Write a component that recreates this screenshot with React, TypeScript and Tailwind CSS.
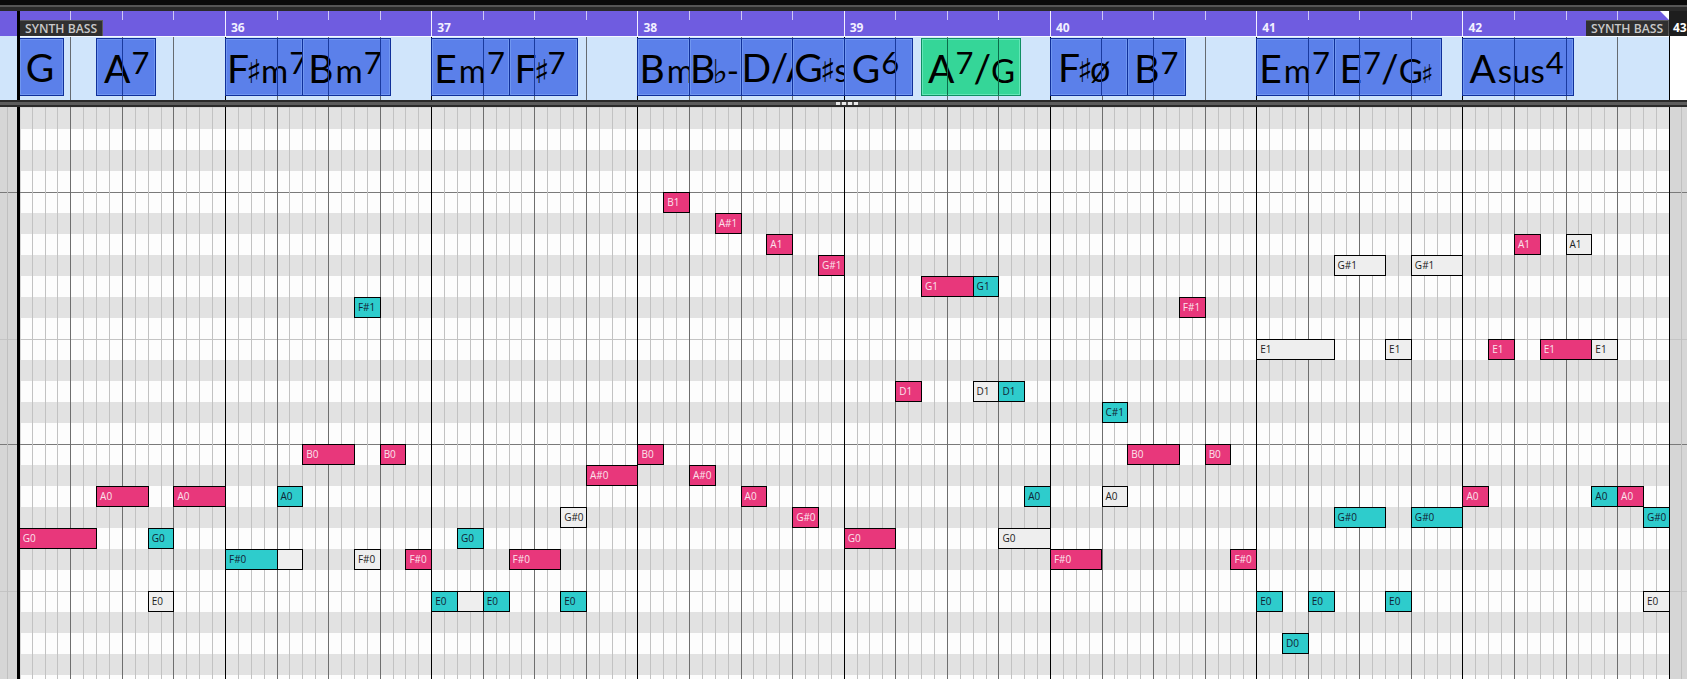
import React from "react";

const STEP = 12.89;
const x = (s: number) => s * STEP - 1.25;

// top to bottom, D#2 down to C0
const ROWS = [
  "D#2", "D2", "C#2", "C2", "B1", "A#1", "A1", "G#1", "G1", "F#1", "F1", "E1", "D#1", "D1",
  "C#1", "C1", "B0", "A#0", "A0", "G#0", "G0", "F#0", "F0", "E0", "D#0", "D0", "C#0", "C0",
];

type Kind = "p" | "t" | "w";
// [pitch, start in 16ths, end in 16ths, colour, label]
const NOTES: [string, number, number, Kind, string?][] = [
  ["G0", 0, 6, "p", "G0"], ["A0", 6, 10, "p", "A0"], ["G0", 10, 12, "t", "G0"], ["E0", 10, 12, "w", "E0"],
  ["A0", 12, 16, "p", "A0"], ["F#0", 16, 20, "t", "F#0"], ["F#0", 20, 22, "w"], ["A0", 20, 22, "t", "A0"],
  ["B0", 22, 26, "p", "B0"], ["F#0", 26, 28, "w", "F#0"], ["F#1", 26, 28, "t", "F#1"], ["B0", 28, 30, "p", "B0"],
  ["F#0", 30, 32, "p", "F#0"], ["E0", 32, 34, "t", "E0"], ["E0", 34, 36, "w"], ["G0", 34, 36, "t", "G0"],
  ["E0", 36, 38, "t", "E0"], ["F#0", 38, 42, "p", "F#0"], ["E0", 42, 44, "t", "E0"], ["G#0", 42, 44, "w", "G#0"],
  ["A#0", 44, 48, "p", "A#0"], ["B0", 48, 50, "p", "B0"], ["B1", 50, 52, "p", "B1"], ["A#0", 52, 54, "p", "A#0"],
  ["A#1", 54, 56, "p", "A#1"], ["A0", 56, 58, "p", "A0"], ["A1", 58, 60, "p", "A1"], ["G#0", 60, 62, "p", "G#0"],
  ["G#1", 62, 64, "p", "G#1"], ["G0", 64, 68, "p", "G0"], ["D1", 68, 70, "p", "D1"], ["G1", 70, 74, "p", "G1"],
  ["G1", 74, 76, "t", "G1"], ["D1", 74, 76, "w", "D1"], ["D1", 76, 78, "t", "D1"], ["G0", 76, 80, "w", "G0"],
  ["A0", 78, 80, "t", "A0"], ["F#0", 80, 84, "p", "F#0"], ["C#1", 84, 86, "t", "C#1"], ["A0", 84, 86, "w", "A0"],
  ["B0", 86, 90, "p", "B0"], ["F#1", 90, 92, "p", "F#1"], ["B0", 92, 94, "p", "B0"], ["F#0", 94, 96, "p", "F#0"],
  ["E1", 96, 102, "w", "E1"], ["E0", 96, 98, "t", "E0"], ["D0", 98, 100, "t", "D0"], ["E0", 100, 102, "t", "E0"],
  ["G#0", 102, 106, "t", "G#0"], ["G#1", 102, 106, "w", "G#1"], ["E1", 106, 108, "w", "E1"], ["E0", 106, 108, "t", "E0"],
  ["G#0", 108, 112, "t", "G#0"], ["G#1", 108, 112, "w", "G#1"], ["A0", 112, 114, "p", "A0"], ["E1", 114, 116, "p", "E1"],
  ["A1", 116, 118, "p", "A1"], ["E1", 118, 122, "p", "E1"], ["E1", 122, 124, "w", "E1"], ["A1", 120, 122, "w", "A1"],
  ["A0", 122, 124, "t", "A0"], ["A0", 124, 126, "p", "A0"], ["G#0", 126, 128, "t", "G#0"], ["E0", 126, 128, "w", "E0"],
];

const noteStyle: Record<Kind, string> = {
  p: "bg-[#e8377b] text-[#fbe3ec]",
  t: "bg-[#2ecccc] text-[#123]",
  w: "bg-[#eeeeee] text-[#222]",
};

type Part = [string, keyof typeof partStyle];
type Chord = { from: number; to: number; pad: string; parts: Part[]; green?: boolean };

const partStyle = {
  r: "text-[39px]",
  a: "text-[33px] font-['DejaVu_Sans',sans-serif] mx-[-3px]",
  b: "text-[26px] font-['DejaVu_Sans',sans-serif] mx-[-2px]",
  l: "text-[33px] ml-[2px]",
  s: "text-[31px] align-[9px] ml-[1px]",
  f: "text-[33px]",
  o: "text-[36px]",
};

const CHORDS: Chord[] = [
  { from: 0, to: 3.45, pad: "pl-[6px]", parts: [["G", "r"]] },
  { from: 6, to: 10.6, pad: "pl-[7px]", parts: [["A", "r"], ["7", "s"]] },
  { from: 16, to: 22, pad: "pl-[1px]", parts: [["F", "r"], ["♯", "a"], ["m", "l"], ["7", "s"]] },
  { from: 22, to: 28.8, pad: "pl-[5px]", parts: [["B", "r"], ["m", "l"], ["7", "s"]] },
  { from: 32, to: 38, pad: "pl-[2px]", parts: [["E", "r"], ["m", "l"], ["7", "s"]] },
  { from: 38, to: 43.3, pad: "pl-[5px]", parts: [["F", "r"], ["♯", "a"], ["7", "s"]] },
  { from: 48, to: 52, pad: "pl-[1px]", parts: [["B", "r"], ["m", "l"], ["7", "s"]] },
  { from: 52, to: 56, pad: "pl-0", parts: [["B", "r"], ["♭", "a"], ["-", "l"], ["7", "s"]] },
  { from: 56, to: 60, pad: "pl-0", parts: [["D", "r"], ["/", "r"], ["A", "r"]] },
  { from: 60, to: 64, pad: "pl-[1px]", parts: [["G", "r"], ["♯", "a"], ["sus", "l"]] },
  { from: 64, to: 69.3, pad: "pl-[7px]", parts: [["G", "r"], ["6", "s"]] },
  { from: 70, to: 77.7, pad: "pl-[6px]", green: true, parts: [["A", "r"], ["7", "s"], ["/", "r"], ["G", "f"]] },
  { from: 80, to: 86, pad: "pl-[7px]", parts: [["F", "r"], ["♯", "a"], ["ø", "o"]] },
  { from: 86, to: 90.5, pad: "pl-[6px]", parts: [["B", "r"], ["7", "s"]] },
  { from: 96, to: 102, pad: "pl-[2px]", parts: [["E", "r"], ["m", "l"], ["7", "s"]] },
  { from: 102, to: 110.3, pad: "pl-[5px]", parts: [["E", "r"], ["7", "s"], ["/", "r"], ["G", "f"], ["♯", "b"]] },
  { from: 112, to: 120.6, pad: "pl-[6px]", parts: [["A", "r"], ["sus", "l"], ["4", "s"]] },
];

const beats = Array.from({ length: 33 }, (_, i) => i * 4);
const sixteenths = Array.from({ length: 129 }, (_, i) => i);

function Tag() {
  return (
    <div className="h-[16px] w-[83px] bg-[#303030] border-t border-r border-[#5a5a5a] text-[#c9c9c9] text-[12.2px] leading-[15px] font-semibold pl-[5px] whitespace-nowrap">
      SYNTH BASS
    </div>
  );
}

function Ruler() {
  return (
    <div className="flex h-[25px] shrink-0">
      <div className="w-[17px] bg-[#6f5ce0]" />
      <div className="w-[3px] bg-black" />
      <div className="relative w-[1649px] bg-[#6f5ce0] overflow-hidden">
        {beats.filter((b) => b < 128 && b > 0).map((b) => (
          <div
            key={b}
            className={b % 16 === 0 ? "absolute top-0 w-px h-[25px] bg-[#f2f0ff]" : "absolute top-0 w-px h-[9px] bg-[#cfc8f5]"}
            style={{ left: x(b) }}
          />
        ))}
        {[36, 37, 38, 39, 40, 41, 42].map((n, i) => (
          <span
            key={n}
            className="absolute top-[9px] text-[12px] leading-[16px] font-bold text-[#f2f0ff]"
            style={{ left: x((i + 1) * 16) + 6 }}
          >
            {n}
          </span>
        ))}
        <div className="absolute top-[9px] left-0"><Tag /></div>
        <div className="absolute top-[9px] right-0"><Tag /></div>
        <div className="absolute top-0 right-0 w-0 h-0 border-t-[9px] border-l-[9px] border-t-white border-l-transparent" />
      </div>
      <div className="flex-1 bg-[#1e1e1e] text-white text-[12px] font-bold leading-[16px] pt-[9px] pl-[4px] overflow-hidden">43</div>
    </div>
  );
}

function ChordCard({ c }: { c: Chord }) {
  const inner = beats.filter((b) => b > c.from && b < c.to);
  return (
    <div
      className={
        "absolute top-[1px] h-[58px] overflow-hidden border flex items-center whitespace-nowrap text-black leading-none font-['Lato',sans-serif] " +
        c.pad +
        " " +
        (c.green
          ? "bg-[#35d698] border-[#0f8f63] shadow-[inset_0_0_0_1px_#63e6b6]"
          : "bg-[#5b80ea] border-[#10309a] shadow-[inset_0_0_0_1px_#7096f0]")
      }
      style={{ left: x(c.from), width: (c.to - c.from) * STEP + 1 }}
    >
      <div>
        {c.parts.map(([t, k], i) => (
          <span key={i} className={partStyle[k]}>{t}</span>
        ))}
      </div>
      {inner.map((b) => (
        <div
          key={b}
          className={c.green ? "absolute inset-y-0 w-px bg-[#0b6b4a]" : "absolute inset-y-0 w-px bg-[#1a3a9e]"}
          style={{ left: (b - c.from) * STEP - 1 }}
        />
      ))}
    </div>
  );
}

function ChordTrack() {
  return (
    <div className="flex h-[64px] shrink-0 bg-[#d0e5fb]">
      <div className="w-[17px]" />
      <div className="w-[3px] bg-black" />
      <div className="relative w-[1649px] overflow-hidden border-t border-[#f4f9ff]">
        {beats.filter((b) => b > 0 && b < 128).map((b) => (
          <div
            key={b}
            className={b % 16 === 0 ? "absolute inset-y-0 w-px bg-black" : "absolute inset-y-0 w-px bg-[#666b70]"}
            style={{ left: x(b) }}
          />
        ))}
        {CHORDS.map((c) => (
          <ChordCard key={c.from} c={c} />
        ))}
      </div>
      <div className="flex-1 bg-white border-l border-black" />
    </div>
  );
}

function Divider() {
  return (
    <div className="h-[7px] shrink-0 bg-[#2a2a2a] flex flex-col justify-center">
      <div className="h-[3px] bg-[#5c5c5c] flex justify-center gap-[2px] pl-[7px]">
        {[0, 1, 2, 3].map((i) => (
          <div key={i} className="w-[4px] h-[3px] bg-[#e8e8e8]" />
        ))}
      </div>
    </div>
  );
}

function Grid() {
  return (
    <div className="relative flex-1 overflow-hidden pt-px bg-[#d6d6d6]">
      {ROWS.map((r) => {
        const line =
          r === "B1" || r === "B0"
            ? "border-t border-[#7a7a7a]"
            : r === "E1" || r === "E0"
              ? "border-t border-[#c4c4c4]"
              : "";
        return (
          <div key={r} className={"flex h-[21px] " + line}>
            <div className="w-[21px] shrink-0" />
            <div className={"w-[1648px] shrink-0 " + (r.includes("#") ? "bg-[#e2e2e2]" : "bg-[#fdfdfd]")} />
          </div>
        );
      })}

      <div className="absolute inset-y-0 left-[7px] w-px bg-[#c0c0c0]" />
      <div className="absolute inset-y-0 left-[17px] w-[3px] bg-black" />
      <div className="absolute inset-y-0 left-[1681px] w-px bg-[#c0c0c0]" />

      <div className="absolute inset-y-0 left-[20px] w-[1650px] overflow-hidden">
        {sixteenths.filter((s) => s > 0).map((s) => (
          <div
            key={s}
            className={
              s % 16 === 0
                ? "absolute inset-y-0 w-px bg-black"
                : s % 4 === 0
                  ? "absolute inset-y-0 w-px bg-[#6e6e6e]"
                  : "absolute inset-y-0 w-px bg-[#c2c2c2]"
            }
            style={{ left: x(s) }}
          />
        ))}
        {NOTES.map(([pitch, from, to, kind, label], i) => (
          <div
            key={i}
            className={
              "absolute h-[21px] border border-black pl-[3px] text-[10px] leading-[19px] overflow-hidden whitespace-nowrap font-['Open_Sans',sans-serif] " +
              noteStyle[kind]
            }
            style={{ left: x(from), top: 1 + ROWS.indexOf(pitch) * 21, width: (to - from) * STEP + 1 }}
          >
            {label}
          </div>
        ))}
      </div>
    </div>
  );
}

export default function App() {
  return (
    <div className="w-[1687px] h-[679px] flex flex-col overflow-hidden bg-white font-['Open_Sans',sans-serif]">
      <div className="h-[5px] shrink-0 bg-[#0a0a0a]" />
      <div className="h-[2px] shrink-0 bg-[#555555]" />
      <div className="h-[4px] shrink-0 bg-[#2a2a2a]" />
      <Ruler />
      <ChordTrack />
      <Divider />
      <Grid />
    </div>
  );
}
